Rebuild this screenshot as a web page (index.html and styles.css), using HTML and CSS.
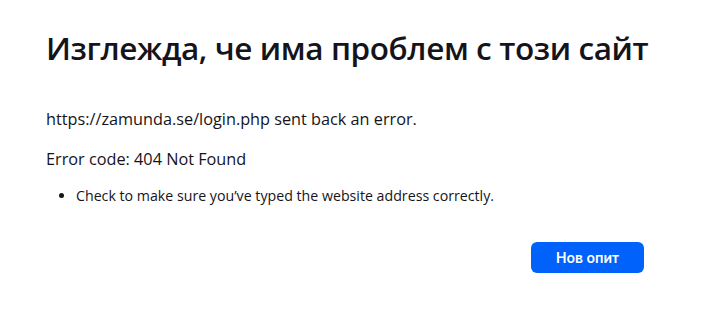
FILE: index.html
```html
<!DOCTYPE html>
<html lang="bg">
<head>
<meta charset="utf-8">
<link rel="stylesheet" href="styles.css">
<title>Проблем при зареждане на страницата</title>
</head>
<body>
<div class="container">
  <h1 class="title">Изглежда, че има проблем с този сайт</h1>
  <p class="desc">https://zamunda.se/login.php sent back an error.</p>
  <p class="code">Error code: 404 Not Found</p>
  <ul class="tips">
    <li>Check to make sure you’ve typed the website address correctly.</li>
  </ul>
  <div class="actions">
    <button class="primary">Нов опит</button>
  </div>
</div>
</body>
</html>
```
FILE: styles.css
```css
html, body {
  margin: 0;
  padding: 0;
  background: #ffffff;
  color: #15141a;
  font-family: "Open Sans", "Noto Sans", sans-serif;
}
.container {
  width: 598px;
  padding: 26px 0 0 46px;
}
.title {
  margin: 0;
  font-size: 31.5px;
  font-weight: 600;
  line-height: 44px;
  letter-spacing: -0.4px;
  white-space: nowrap;
}
.desc {
  margin: 38px 0 0;
  font-size: 16.25px;
  line-height: 22px;
}
.code {
  margin: 18px 0 0;
  font-size: 16.25px;
  line-height: 22px;
}
.tips {
  margin: 16px 0 0;
  padding-left: 30px;
  font-size: 14.2px;
  line-height: 20px;
}
.actions {
  display: flex;
  justify-content: flex-end;
  margin-top: 36px;
}
.primary {
  background: #0062fa;
  color: #fff;
  border: none;
  border-radius: 6px;
  width: 113px;
  height: 31px;
  font-family: "Inter", "Open Sans", sans-serif;
  font-weight: 600;
  font-size: 14px;
  padding: 0;
}
```
